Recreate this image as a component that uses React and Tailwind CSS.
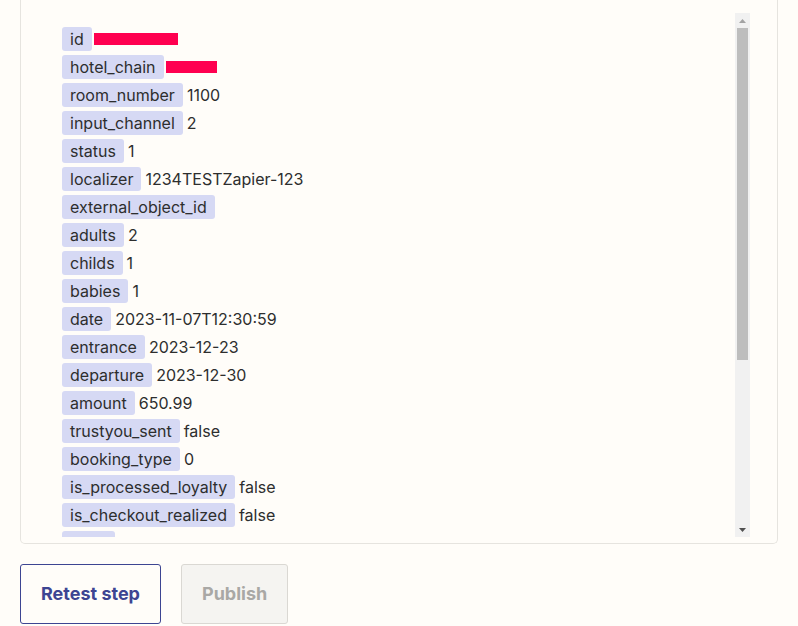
const rows = [
  { k: "id", redact: 84 },
  { k: "hotel_chain", redact: 51 },
  { k: "room_number", v: "1100" },
  { k: "input_channel", v: "2" },
  { k: "status", v: "1" },
  { k: "localizer", v: "1234TESTZapier-123" },
  { k: "external_object_id" },
  { k: "adults", v: "2" },
  { k: "childs", v: "1" },
  { k: "babies", v: "1" },
  { k: "date", v: "2023-11-07T12:30:59" },
  { k: "entrance", v: "2023-12-23" },
  { k: "departure", v: "2023-12-30" },
  { k: "amount", v: "650.99" },
  { k: "trustyou_sent", v: "false" },
  { k: "booking_type", v: "0" },
  { k: "is_processed_loyalty", v: "false" },
  { k: "is_checkout_realized", v: "false" },
  { k: "hotel", v: "" },
];

export default function App() {
  return (
    <div
      className="w-[798px] h-[626px] overflow-hidden bg-[#fffdf9] px-5 text-[#2d2e2e]"
      style={{ fontFamily: "Inter, 'Noto Sans', sans-serif" }}
    >
      <div className="h-[544px] border-x border-b border-[#e6e4df] rounded-b-[5px] pt-[13px] pr-[27px]">
        <div className="flex h-[524px]">
          <div className="flex-1 overflow-hidden pl-[41px] pt-[14px]">
            <div className="flex flex-col gap-1">
              {rows.map((r) => (
                <div key={r.k} className="flex items-center h-6 text-[16px] leading-6">
                  <span className="bg-[#d6d9f4] rounded-[3px] px-2 h-6 leading-6">{r.k}</span>
                  {r.redact ? (
                    <span className="ml-[2px] h-3 bg-[#ff0050]" style={{ width: r.redact }} />
                  ) : (
                    r.v && <span className="ml-1">{r.v}</span>
                  )}
                </div>
              ))}
            </div>
          </div>
          <div className="w-[15px] bg-[#f1f1f1] flex flex-col items-center">
            <div className="h-[15px] flex items-center justify-center">
              <svg width="7" height="4" viewBox="0 0 7 4"><path d="M3.5 0L7 4H0z" fill="#a3a3a3" /></svg>
            </div>
            <div className="w-[11px] h-[332px] bg-[#bdbdbd]" />
            <div className="flex-1" />
            <div className="h-[15px] flex items-center justify-center">
              <svg width="7" height="4" viewBox="0 0 7 4"><path d="M0 0H7L3.5 4z" fill="#505050" /></svg>
            </div>
          </div>
        </div>
      </div>
      <div className="flex gap-5 mt-5">
        <button className="h-[60px] px-[20px] pb-[2px] border border-[#3d4592] rounded-[3px] text-[#3d4592] font-bold text-[18px]">
          Retest step
        </button>
        <button className="h-[60px] px-[20px] pb-[2px] border border-[#dad8d3] bg-[#f5f4f1] rounded-[3px] text-[#a9a8a5] font-bold text-[18px]">
          Publish
        </button>
      </div>
    </div>
  );
}
